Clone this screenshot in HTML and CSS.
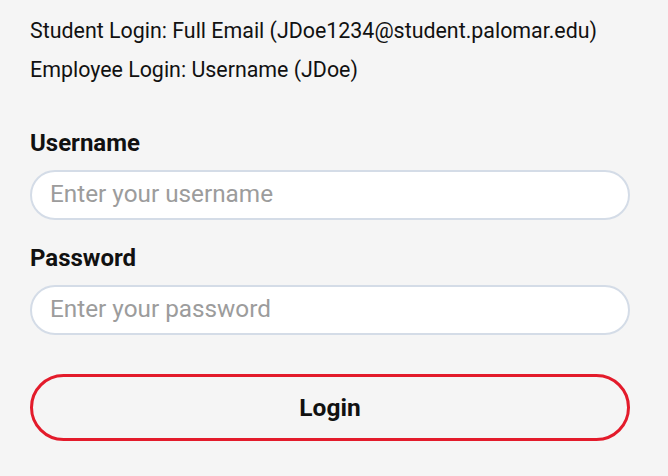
FILE: index.html
```html
<!DOCTYPE html>
<html lang="en">

<head>
    <meta charset="UTF-8">
    <title>Login</title>
    <link rel="stylesheet" href="styles.css">
</head>

<body>
    <div class="login">
        <div class="hint">
            <p>Student Login: Full Email (JDoe1234@student.palomar.edu)</p>
            <p>Employee Login: Username (JDoe)</p>
        </div>
        <div class="campo">
            <label for="username">Username</label>
            <input type="text" id="username" placeholder="Enter your username">
        </div>
        <div class="campo">
            <label for="password">Password</label>
            <input type="password" id="password" placeholder="Enter your password">
        </div>
        <button class="btn-login">Login</button>
    </div>
</body>

</html>
```

FILE: styles.css
```css
body {
    margin: 0;
    background-color: #f5f5f5;
    font-family: Roboto, "Liberation Sans", sans-serif;
    color: #111;
}

.login {
    padding: 11px 38px 0 30px;
    display: flex;
    flex-direction: column;
}

.hint p {
    margin: 0;
    font-size: 21.4px;
    line-height: 39px;
}

.hint {
    margin-bottom: 40px;
}

.campo {
    display: flex;
    flex-direction: column;
    margin-bottom: 24px;
}

.campo label {
    font-weight: bold;
    font-size: 24px;
    line-height: 28px;
    margin-bottom: 13px;
}

.campo input {
    height: 50px;
    box-sizing: border-box;
    border: 2px solid #d4dce7;
    border-radius: 25px;
    background: #fff;
    padding: 0 18px 3px 18px;
    font-family: inherit;
    font-size: 24.3px;
    color: #333;
}

.campo input::placeholder {
    color: #9c9c9c;
}

.btn-login {
    margin-top: 15px;
    height: 67px;
    border: 3px solid #e31b2b;
    border-radius: 34px;
    background: #f5f5f5;
    font-family: inherit;
    font-weight: bold;
    font-size: 24.5px;
    color: #111;
}
```
